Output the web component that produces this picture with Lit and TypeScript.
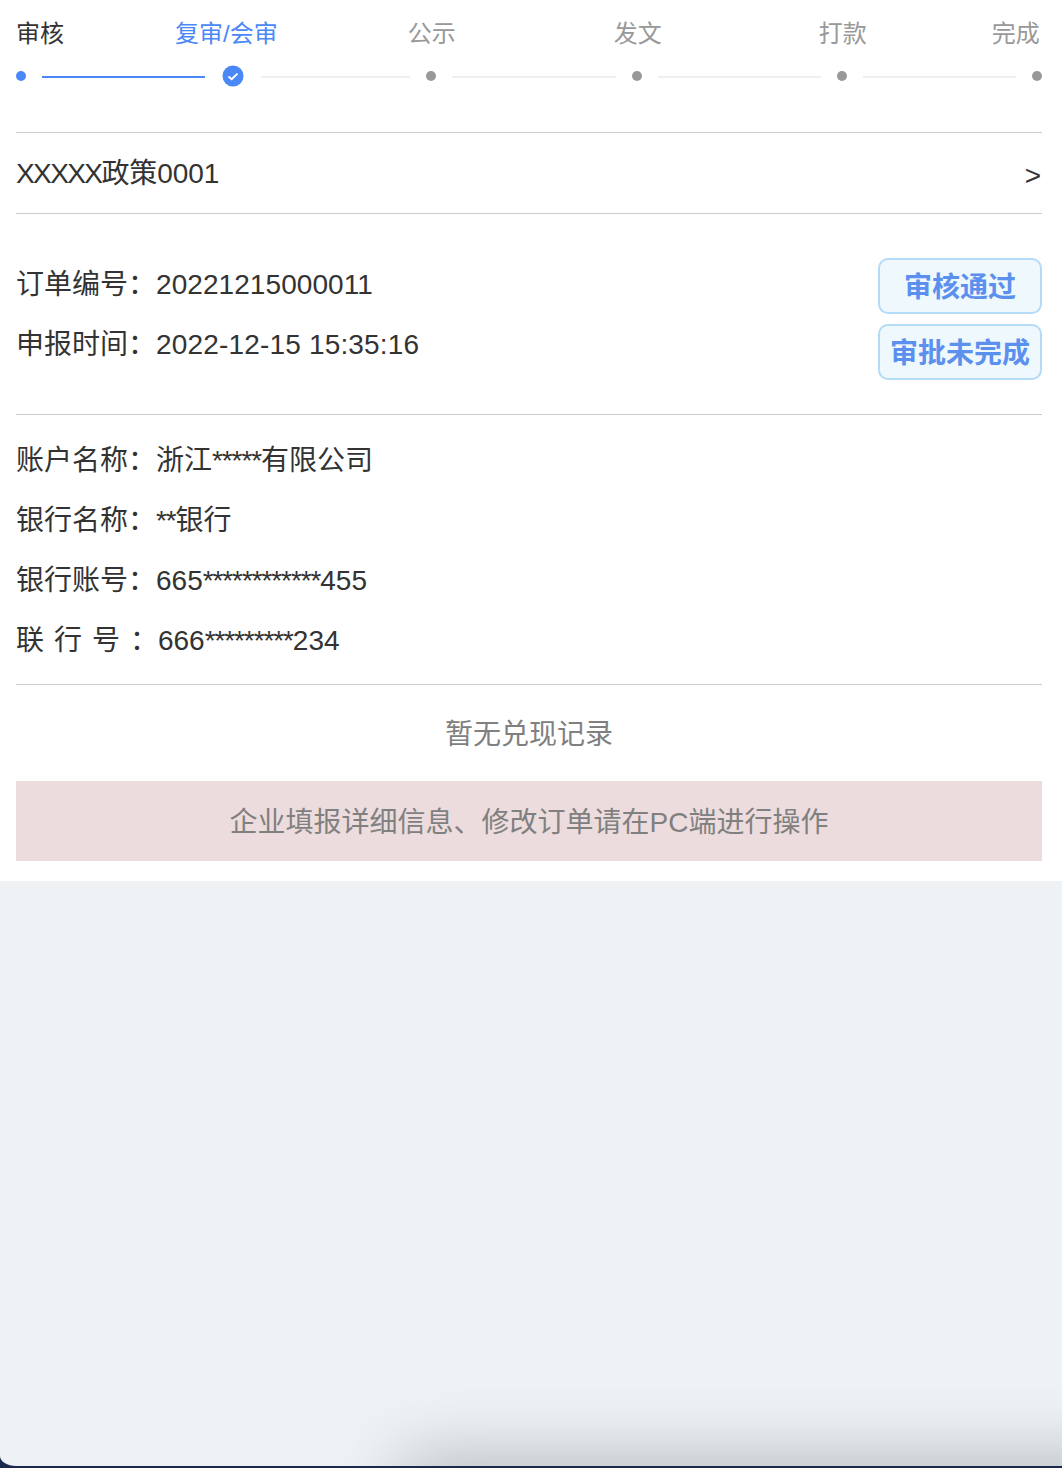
import { LitElement, html, css } from "lit";
import { customElement } from "lit/decorators.js";

const steps = [
  { label: "审核", gap: 16, line: 163, kind: "done" },
  { label: "复审/会审", gap: 111, line: 149, kind: "current" },
  { label: "公示", gap: 130, line: 164, kind: "todo" },
  { label: "发文", gap: 158, line: 163, kind: "todo" },
  { label: "打款", gap: 157, line: 153, kind: "todo" },
  { label: "完成", gap: 125, line: 0, kind: "todo" },
];

@customElement("app-root")
export class AppRoot extends LitElement {
  static styles = css`
    :host {
      display: block;
      width: 1062px;
      height: 1468px;
      background: #1b2a4c;
      font-family: "Liberation Sans", "Noto Sans CJK SC", sans-serif;
      color: #333;
      overflow: hidden;
    }
    .screen {
      position: relative;
      height: 1466px;
      background: #eef2f5;
      border-bottom-left-radius: 16px 10px;
      overflow: hidden;
    }
    .card {
      background: #fff;
      height: 881px;
      padding: 0 20px 0 16px;
      box-sizing: border-box;
    }
    .labels {
      display: flex;
      height: 65px;
      align-items: flex-start;
      padding-top: 20px;
      box-sizing: border-box;
      font-size: 24px;
      line-height: 28px;
      color: #999;
      margin-left: -16px;
      white-space: nowrap;
    }
    .labels span { flex: none; }
    .labels .done { color: #333; }
    .labels .current { color: #4b88f7; }
    .track {
      display: flex;
      align-items: center;
      height: 22px;
      gap: 16px;
    }
    .dot {
      width: 10px;
      height: 10px;
      border-radius: 50%;
      background: #999;
      flex: none;
      margin-top: -1px;
    }
    .dot.done { background: #4b88f7; }
    .check {
      width: 22px;
      height: 22px;
      flex: none;
      margin-left: 1px;
      margin-right: 1px;
    }
    .line {
      height: 2px;
      background: #eeeef3;
      flex: none;
      margin-top: 1px;
    }
    .line.done { background: #4b88f7; }
    .title {
      margin-top: 45px;
      border-top: 1px solid #ccc;
      border-bottom: 1px solid #ccc;
      height: 82px;
      box-sizing: border-box;
      display: flex;
      justify-content: space-between;
      align-items: center;
      font-size: 28px;
    }
    .title .name { margin-top: -4px; letter-spacing: -0.05px; }
    .title .x { letter-spacing: -1.6px; }
    .arrow { font-size: 28px; margin-top: 6px; margin-right: 1px; }
    .order {
      display: flex;
      justify-content: space-between;
      height: 201px;
      box-sizing: border-box;
      border-bottom: 1px solid #ccc;
      padding-top: 44px;
    }
    .rows {
      display: flex;
      flex-direction: column;
      gap: 20px;
      padding-top: 7px;
    }
    .row {
      font-size: 28px;
      line-height: 40px;
      height: 40px;
      white-space: pre;
    }
    .no { letter-spacing: 0.07px; }
    .stamp { letter-spacing: 0.17px; }
    .stars { letter-spacing: -1.1px; }
    .spaced { word-spacing: 2.2px; }
    .badges {
      display: flex;
      flex-direction: column;
      gap: 10px;
    }
    .badge {
      width: 164px;
      height: 56px;
      box-sizing: border-box;
      border: 2px solid #b3daf7;
      border-radius: 10px;
      background: #eff8fc;
      color: #5b90ef;
      font-size: 28px;
      font-weight: 700;
      padding-bottom: 2px;
      display: flex;
      align-items: center;
      justify-content: center;
    }
    .account {
      height: 270px;
      box-sizing: border-box;
      border-bottom: 1px solid #ccc;
      padding-top: 26px;
      display: flex;
      flex-direction: column;
      gap: 20px;
    }
    .empty {
      height: 96px;
      padding-bottom: 2px;
      box-sizing: border-box;
      display: flex;
      align-items: center;
      justify-content: center;
      font-size: 28px;
      color: #808080;
    }
    .notice {
      height: 80px;
      padding-bottom: 2px;
      box-sizing: border-box;
      background: #ecdcdd;
      display: flex;
      align-items: center;
      justify-content: center;
      font-size: 28px;
      color: #808080;
    }
    .shadow {
      position: absolute;
      left: 410px;
      right: -100px;
      top: 1470px;
      height: 40px;
      box-shadow: 0 0 70px 8px rgba(0, 0, 0, 0.28);
    }
  `;

  private icon() {
    return html`<svg class="check" viewBox="0 0 22 22">
      <circle cx="11" cy="11" r="10.5" fill="#4b88f7"></circle>
      <path d="M6.5 11.5 9.7 14.2 15.5 8.6" fill="none" stroke="#fff" stroke-width="2"></path>
    </svg>`;
  }

  render() {
    return html`
      <div class="screen">
        <div class="card">
          <div class="labels">
            ${steps.map(
              (s) => html`<span class=${s.kind} style="margin-left:${s.gap}px">${s.label}</span>`
            )}
          </div>
          <div class="track">
            ${steps.map(
              (s) => html`
                ${s.kind === "current" ? this.icon() : html`<span class="dot ${s.kind}"></span>`}
                ${s.line
                  ? html`<span class="line ${s.kind}" style="width:${s.line}px"></span>`
                  : ""}
              `
            )}
          </div>
          <div class="title">
            <span class="name"><span class="x">XXXXX</span>政策0001</span>
            <span class="arrow">&gt;</span>
          </div>
          <div class="order">
            <div class="rows">
              <div class="row">订单编号：<span class="no">20221215000011</span></div>
              <div class="row">申报时间：<span class="stamp">2022-12-15 15:35:16</span></div>
            </div>
            <div class="badges">
              <div class="badge">审核通过</div>
              <div class="badge">审批未完成</div>
            </div>
          </div>
          <div class="account">
            <div class="row">账户名称：浙江<span class="stars">*****</span>有限公司</div>
            <div class="row">银行名称：<span class="stars">**</span>银行</div>
            <div class="row">银行账号：665<span class="stars">************</span>455</div>
            <div class="row"><span class="spaced">联 行 号 ：</span>666<span class="stars">*********</span>234</div>
          </div>
          <div class="empty">暂无兑现记录</div>
          <div class="notice">企业填报详细信息、修改订单请在PC端进行操作</div>
        </div>
        <div class="shadow"></div>
      </div>
    `;
  }
}
